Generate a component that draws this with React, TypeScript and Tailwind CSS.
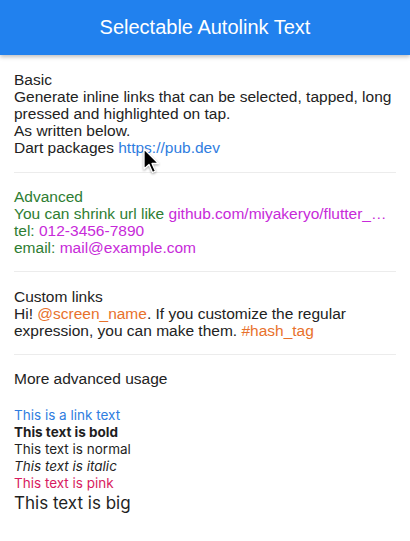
import React from 'react';

const Divider = () => <div className="mx-[14px] h-px bg-[#ececec]" />;

const Cursor = () => (
  <svg
    className="absolute left-[142px] top-[148px] drop-shadow-[0_1px_1px_rgba(0,0,0,0.35)]"
    width="20"
    height="28"
    viewBox="0 0 20 28"
  >
    <path
      d="M2 1 L2 21 L7 16.5 L10.5 24.5 L13.5 23.2 L10 15.5 L16.5 15.5 Z"
      fill="#000"
      stroke="#fff"
      strokeWidth="1.3"
      strokeLinejoin="round"
    />
  </svg>
);

export default function App() {
  return (
    <div className="relative min-h-[541px] w-[410px] bg-white text-[15.5px] leading-[17px] text-[#222] [font-family:'Liberation_Sans',Arial,sans-serif]">
      <header className="flex h-[55px] items-center justify-center bg-[#2181ee] shadow-[0_2px_4px_rgba(0,0,0,0.25)]">
        <h1 className="text-[20px] text-white">Selectable Autolink Text</h1>
      </header>

      {/* Basic */}
      <section className="px-[14px] py-4">
        <p>Basic</p>
        <p>Generate inline links that can be selected, tapped, long pressed and highlighted on tap.</p>
        <p>As written below.</p>
        <p>
          Dart packages <span className="text-[#2f7de0]">https://pub.dev</span>
        </p>
      </section>
      <Divider />

      {/* Advanced */}
      <section className="px-[14px] py-[15px] text-[#2e7d32]">
        <p>Advanced</p>
        <p>
          You can shrink url like <span className="text-[#c72ad9]">github.com/miyakeryo/flutter_…</span>
        </p>
        <p>
          tel: <span className="text-[#c72ad9]">012-3456-7890</span>
        </p>
        <p>
          email: <span className="text-[#c72ad9]">mail@example.com</span>
        </p>
      </section>
      <Divider />

      {/* Custom links */}
      <section className="px-[14px] pt-4 pb-[15px]">
        <p>Custom links</p>
        <p>
          Hi! <span className="text-[#e8712b]">@screen_name</span>. If you customize the regular expression, you can
          make them. <span className="text-[#e8712b]">#hash_tag</span>
        </p>
      </section>
      <Divider />

      {/* More advanced usage */}
      <section className="px-[14px] py-[15px]">
        <p>More advanced usage</p>
        <p>&nbsp;</p>
        <div className="mt-[3px] text-[13.5px] [font-family:Inter,sans-serif] text-[#1f1f1f]">
          <p className="text-[#2f7de0]">This is a link text</p>
          <p className="font-bold">This text is bold</p>
          <p>This text is normal</p>
          <p className="italic">This text is italic</p>
          <p className="text-[#d81b60]">This text is pink</p>
          <p className="text-[17px] leading-[22px]">This text is big</p>
        </div>
      </section>

      <Cursor />
    </div>
  );
}
